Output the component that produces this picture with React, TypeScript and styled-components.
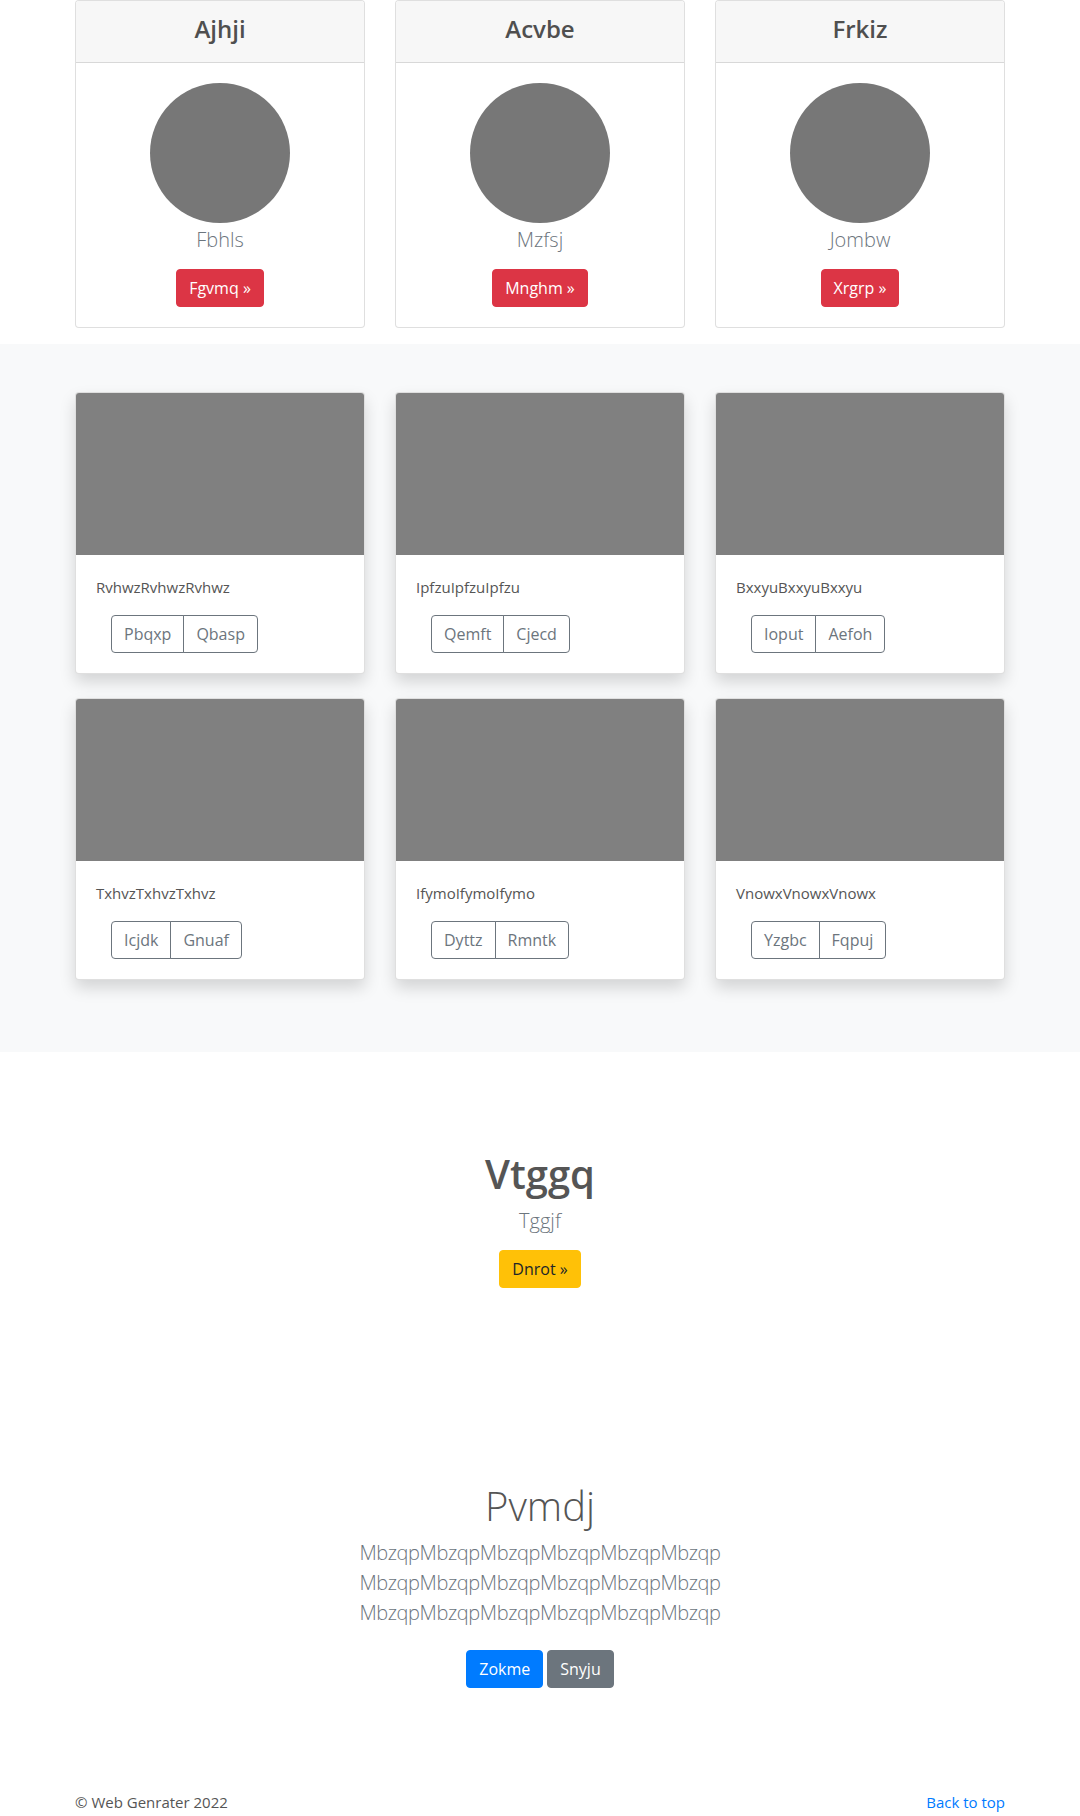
import React from "react";
import styled, { createGlobalStyle, css } from "styled-components";

const GlobalStyle = createGlobalStyle`
  html, body { margin: 0; padding: 0; }
  body {
    font-family: "Open Sans", "Noto Sans", Arial, sans-serif;
    font-size: 16px;
    line-height: 1.5;
    color: #555;
    background: #fff;
  }
  * { box-sizing: border-box; }
`;

const Container = styled.div`
  max-width: 960px;
  margin: 0 auto;
  padding: 0 15px;
`;

const CardGrid = styled.div`
  display: grid;
  grid-template-columns: repeat(3, 1fr);
  column-gap: 30px;
`;

const PricingCard = styled.div`
  border: 1px solid rgba(0, 0, 0, 0.125);
  border-radius: 4px;
  margin-bottom: 16px;
  text-align: center;
  background: #fff;
  overflow: hidden;
`;

const CardHeader = styled.div`
  background: #f7f7f7;
  padding: 14px 20px 10px;
  border-bottom: 1px solid rgba(0, 0, 0, 0.125);
`;

const CardTitle = styled.h4`
  margin: 0 0 8px;
  font-size: 24px;
  line-height: 1.2;
  font-weight: 600;
  color: #4f4f4f;
`;

const CardBody = styled.div`
  padding: 20px;
`;

const Avatar = styled.div`
  width: 140px;
  height: 140px;
  border-radius: 50%;
  background: #777;
  margin: 0 auto;
`;

const Lead = styled.p`
  margin: 0 0 14px;
  padding-top: 2px;
  font-size: 20px;
  font-weight: 300;
  line-height: 30px;
  color: #6c757d;
`;

const HeroLead = styled.p`
  margin: 0 0 14px;
  padding-top: 2px;
  font-size: 20px;
  font-weight: 300;
  line-height: 30px;
  letter-spacing: -0.4px;
  color: #6c757d;
`;

type Variant = "danger" | "warning" | "primary" | "secondary";

const variants: Record<Variant, ReturnType<typeof css>> = {
  danger: css`background: #dc3545; border-color: #dc3545; color: #fff;`,
  warning: css`background: #ffc107; border-color: #ffc107; color: #212529;`,
  primary: css`background: #007bff; border-color: #007bff; color: #fff;`,
  secondary: css`background: #6c757d; border-color: #6c757d; color: #fff;`,
};

const Button = styled.a<{ $variant: Variant }>`
  display: inline-block;
  padding: 6px 12px;
  font-size: 16px;
  line-height: 24px;
  font-weight: 400;
  border: 1px solid transparent;
  border-radius: 4px;
  text-decoration: none;
  cursor: pointer;
  ${(p) => variants[p.$variant]}
`;

const AlbumSection = styled.section`
  background: #f8f9fa;
  padding: 48px 0;
`;

const AlbumCard = styled.div`
  background: #fff;
  border: 1px solid rgba(0, 0, 0, 0.125);
  border-radius: 4px;
  margin-bottom: 24px;
  box-shadow: 0 8px 16px rgba(0, 0, 0, 0.15);
  overflow: hidden;
`;

const Thumb = styled.div`
  height: 162px;
  background: #808080;
`;

const AlbumBody = styled.div`
  padding: 20px;
`;

const AlbumText = styled.p`
  margin: 0 0 16px;
  font-size: 15px;
  line-height: 24px;
  color: #555;
`;

const BtnGroup = styled.div`
  display: inline-flex;
  margin-left: 15px;
`;

const OutlineButton = styled.button`
  font-family: inherit;
  font-size: 16px;
  line-height: 24px;
  padding: 6px 12px;
  background: transparent;
  color: #6c757d;
  border: 1px solid #6c757d;
  cursor: pointer;
  &:first-child { border-radius: 4px 0 0 4px; }
  &:last-child { border-radius: 0 4px 4px 0; margin-left: -1px; }
`;

const Hero = styled.section<{ $bottom?: number }>`
  text-align: center;
  padding: 96px 0 ${(p) => (p.$bottom ?? 96)}px;
`;

const HeroTitle = styled.h1<{ $light?: boolean }>`
  margin: 0 0 6px;
  padding-top: 2px;
  font-size: 40px;
  line-height: 48px;
  font-weight: ${(p) => (p.$light ? 300 : 600)};
  color: #555;
`;

const HeroInner = styled.div`
  max-width: 450px;
  margin: 0 auto;
`;

const ButtonRow = styled.div`
  display: flex;
  justify-content: center;
  gap: 4px;
  padding: 8px 0;
`;

const Footer = styled.footer`
  padding: 0;
`;

const FooterRow = styled.div`
  display: flex;
  justify-content: space-between;
  align-items: center;
  line-height: 24px;
  font-size: 15px;
`;

const FooterLink = styled.a`
  color: #007bff;
  text-decoration: none;
`;

const pricing = [
  { title: "Ajhji", lead: "Fbhls", btn: "Fgvmq" },
  { title: "Acvbe", lead: "Mzfsj", btn: "Mnghm" },
  { title: "Frkiz", lead: "Jombw", btn: "Xrgrp" },
];

const album = [
  { t: "Rvhwz", a: "Pbqxp", b: "Qbasp" },
  { t: "Ipfzu", a: "Qemft", b: "Cjecd" },
  { t: "Bxxyu", a: "Ioput", b: "Aefoh" },
  { t: "Txhvz", a: "Icjdk", b: "Gnuaf" },
  { t: "Ifymo", a: "Dyttz", b: "Rmntk" },
  { t: "Vnowx", a: "Yzgbc", b: "Fqpuj" },
];

const group = "Mbzqp".repeat(6);

export default function App() {
  return (
    <>
      <GlobalStyle />
      <Container>
        <CardGrid>
          {pricing.map((p) => (
            <PricingCard key={p.title}>
              <CardHeader>
                <CardTitle>{p.title}</CardTitle>
              </CardHeader>
              <CardBody>
                <Avatar />
                <Lead>{p.lead}</Lead>
                <Button $variant="danger">{p.btn} »</Button>
              </CardBody>
            </PricingCard>
          ))}
        </CardGrid>
      </Container>

      <AlbumSection>
        <Container>
          <CardGrid>
            {album.map((c) => (
              <AlbumCard key={c.t}>
                <Thumb />
                <AlbumBody>
                  <AlbumText>{c.t.repeat(3)}</AlbumText>
                  <BtnGroup>
                    <OutlineButton>{c.a}</OutlineButton>
                    <OutlineButton>{c.b}</OutlineButton>
                  </BtnGroup>
                </AlbumBody>
              </AlbumCard>
            ))}
          </CardGrid>
        </Container>
      </AlbumSection>

      <Hero>
        <Container>
          <HeroTitle>Vtggq</HeroTitle>
          <Lead>Tggjf</Lead>
          <Button $variant="warning">Dnrot »</Button>
        </Container>
      </Hero>

      <Hero $bottom={94}>
        <Container>
          <HeroInner>
            <HeroTitle $light>Pvmdj</HeroTitle>
            <HeroLead>
              {group} {group} {group}
            </HeroLead>
            <ButtonRow>
              <Button $variant="primary">Zokme</Button>
              <Button $variant="secondary">Snyju</Button>
            </ButtonRow>
          </HeroInner>
        </Container>
      </Hero>

      <Footer>
        <Container>
          <FooterRow>
            <span>© Web Genrater 2022</span>
            <FooterLink href="#">Back to top</FooterLink>
          </FooterRow>
        </Container>
      </Footer>
    </>
  );
}
